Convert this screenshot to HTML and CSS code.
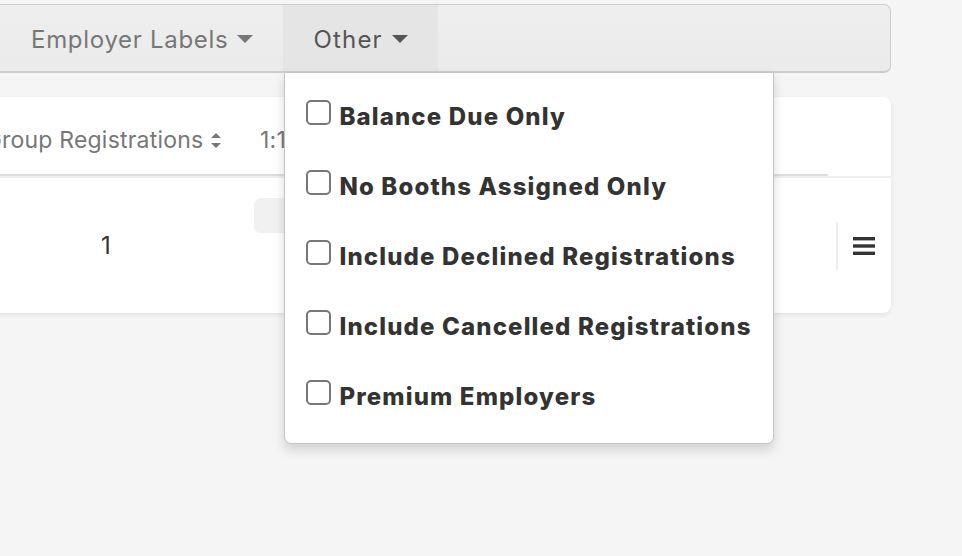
FILE: index.html
```html
<!DOCTYPE html>
<html lang="en">
<head>
<meta charset="utf-8">
<title>Registrations</title>
<link rel="stylesheet" href="styles.css">
</head>
<body>
<div class="page">
  <nav class="navbar">
    <div class="nav-item">Employer Labels <span class="caret"></span></div>
    <div class="nav-item active">Other <span class="caret"></span>
      <ul class="dropdown">
        <li><span class="box"></span>Balance Due Only</li>
        <li><span class="box"></span>No Booths Assigned Only</li>
        <li><span class="box"></span>Include Declined Registrations</li>
        <li><span class="box"></span>Include Cancelled Registrations</li>
        <li><span class="box"></span>Premium Employers</li>
      </ul>
    </div>
  </nav>

  <div class="card">
    <div class="row head">
      <div class="cell c1">Group Registrations
        <svg class="sort" width="10" height="15" viewBox="0 0 10 15"><path d="M5 0L10 5H0Z M5 15L10 10H0Z" fill="#777"/></svg>
      </div>
      <div class="cell c2">1:1</div>
      <div class="cell c3"></div>
      <div class="cell c4"></div>
    </div>
    <div class="row body">
      <div class="cell c1">1</div>
      <div class="cell c2"><span class="pill"></span></div>
      <div class="cell c3"></div>
      <div class="cell c4">
        <span class="divider"></span>
        <svg class="menu" width="22" height="18" viewBox="0 0 22 18"><rect x="0" y="0" width="22" height="3.4" fill="#333"/><rect x="0" y="7.3" width="22" height="3.4" fill="#333"/><rect x="0" y="14.6" width="22" height="3.4" fill="#333"/></svg>
      </div>
    </div>
  </div>
</div>
</body>
</html>
```

FILE: styles.css
```css
html {
  overflow: hidden;
  background: #f5f5f5;
}

body {
  margin: 0;
  padding: 0;
  background: #f5f5f5;
  font-family: Inter, "Noto Sans", "Liberation Sans", sans-serif;
  min-height: 556px;
}

.page {
  margin-left: -40px;
  padding-top: 4px;
  width: 931px;
}

.navbar {
  display: flex;
  height: 66px;
  padding-left: 40px;
  background: linear-gradient(#eeeeee, #ebebeb);
  border: 1px solid #cccccc;
  border-bottom-width: 2px;
  border-radius: 7px;
}

.nav-item {
  position: relative;
  padding: 2px 30px 0;
  font-size: 24px;
  letter-spacing: 0.7px;
  color: #777777;
  display: flex;
  align-items: center;
  gap: 9px;
}

.nav-item.active {
  background: #e5e5e5;
  color: #555555;
  letter-spacing: 1.2px;
  gap: 9px;
}

.caret {
  width: 0;
  height: 0;
  border-left: 8px solid transparent;
  border-right: 8px solid transparent;
  border-top: 8px solid #777777;
}

.nav-item.active .caret {
  border-top-color: #555555;
}

.dropdown {
  position: absolute;
  top: calc(100% + 1px);
  left: 1px;
  width: 447px;
  margin: 0;
  padding: 27px 20px 38px 21px;
  list-style: none;
  background: #ffffff;
  border: 1px solid #c4c4c4;
  border-radius: 0 0 7px 7px;
  box-shadow: 0 6px 12px rgba(0, 0, 0, 0.15);
  z-index: 10;
  display: flex;
  flex-direction: column;
  gap: 45px;
}

.dropdown li {
  font-size: 24px;
  font-weight: 800;
  letter-spacing: 1.15px;
  color: #333333;
  line-height: 25px;
  height: 25px;
  white-space: nowrap;
}

.box {
  display: inline-block;
  width: 21px;
  height: 21px;
  border: 2px solid #777777;
  border-radius: 5px;
  margin-right: 8px;
  vertical-align: baseline;
  box-sizing: content-box;
}

.card {
  margin-top: 24px;
  background: #ffffff;
  border-radius: 8px;
  box-shadow: 0 2px 5px rgba(0, 0, 0, 0.08);
}

.row {
  display: grid;
  grid-template-columns: 290px 280px 298px 63px;
}

.row.head {
  height: 79px;
}

.row.head .cell {
  border-bottom: 2px solid #dddddd;
}

.row.head .cell.c4 {
  border-bottom: none;
}

.row.body {
  height: 135px;
  border-top: 2px solid #eeeeee;
}

.cell {
  display: flex;
  align-items: center;
  box-sizing: border-box;
}

.head .cell {
  font-size: 23px;
  letter-spacing: 0.2px;
  color: #777777;
}

.head .c1 {
  justify-content: center;
  gap: 8px;
  padding-top: 9px;
  padding-right: 4px;
}

.head .c2 {
  padding-left: 10px;
  padding-top: 9px;
}

.body .c1 {
  justify-content: center;
  font-size: 24px;
  color: #333333;
  padding-left: 2px;
}

.body .c2 {
  align-items: flex-start;
  padding-left: 4px;
  padding-top: 20px;
}

.pill {
  display: block;
  width: 120px;
  height: 35px;
  border-radius: 7px;
  background: #f1f1f1;
}

.body .c4 {
  padding-left: 8px;
  gap: 15px;
}

.divider {
  width: 2px;
  height: 48px;
  background: #eeeeee;
}

.menu {
  display: block;
}
```
